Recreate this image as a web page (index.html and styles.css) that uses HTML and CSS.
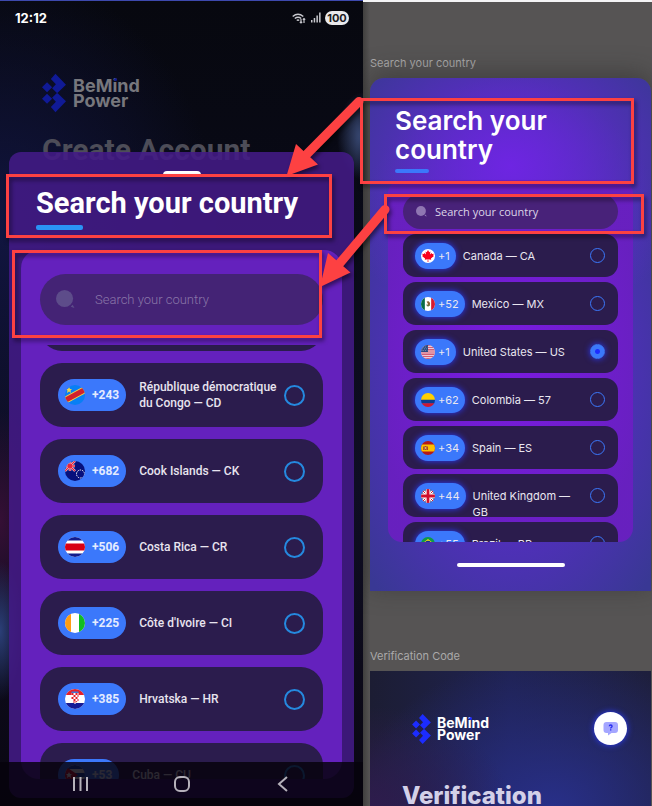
FILE: index.html
```html
<!DOCTYPE html>
<html lang="en">
<head>
<meta charset="utf-8">
<meta name="viewport" content="width=device-width, initial-scale=1">
<title>Search your country</title>
<link rel="stylesheet" href="styles.css">
</head>
<body>
<svg class="defs" aria-hidden="true">
  <symbol id="mark" viewBox="0 0 57 91">
    <path d="M32 0 57 26 36 46 24 34 33 25 21 12ZM32 91 57 65 36 45 24 57 33 66 21 79ZM12 20 24 32 12 44 0 32ZM12 47 24 59 12 71 0 59Z"/>
  </symbol>
  <symbol id="lens" viewBox="0 0 20 20">
    <circle cx="9" cy="9" r="9"/><path d="M15.500 17.500 17.500 15.500 19.500 19Z"/>
  </symbol>
  <symbol id="cd" viewBox="0 0 20 20"><path fill="#087ff5" d="M0 0h20v20H0z"/><path stroke="#f3d64a" stroke-width="7" d="M-1 16 21 4"/><path stroke="#d3202c" stroke-width="5" d="M-1 16 21 4"/><path fill="#f3d64a" d="m4 2 1 2h2L5.500 5.500 6 8 4 6.500 2 8l.5-2.500L1 4h2z"/></symbol>
  <symbol id="ck" viewBox="0 0 20 20"><path fill="#07107c" d="M0 0h20v20H0z"/><path stroke="#fff" stroke-width="2.400" d="M0 0 10 10M10 0 0 10M5 0v10M0 5h10"/><path stroke="#e3233b" stroke-width="1.400" d="M0 0 10 10M10 0 0 10M5 0v10M0 5h10"/><circle cx="15.500" cy="13" r="4" fill="none" stroke="#fff" stroke-width="1" stroke-dasharray="1.500 1"/></symbol>
  <symbol id="cr" viewBox="0 0 20 20"><path fill="#fff" d="M0 0h20v20H0z"/><path fill="#111a8c" d="M0 0h20v3.500H0zM0 16.500h20V20H0z"/><path fill="#d80012" d="M0 6.500h20v7H0z"/></symbol>
  <symbol id="ci" viewBox="0 0 20 20"><path fill="#fff" d="M0 0h20v20H0z"/><path fill="#ff9d13" d="M0 0h6v20H0z"/><path fill="#12bd22" d="M14 0h6v20h-6z"/></symbol>
  <symbol id="hr" viewBox="0 0 20 20"><path fill="#fff" d="M0 0h20v20H0z"/><path fill="#e5202a" d="M0 0h20v6H0z"/><path fill="#161a96" d="M0 14h20v6H0z"/><path fill="#fff" d="M6.500 4h7v8l-3.500 3-3.500-3z"/><path fill="#e5202a" d="M6.500 4h2v2h-2zm4 0h2v2h-2zm-2 2h2v2h-2zm4 0h1v2h-1zm-6 2h2v2h-2zm4 0h2v2h-2zm-2 2h2v2h-2zm4 0h1v2h-1zm-4 2h1v2h-1zm2 0h2l-2 2z"/><path fill="#3e7bd8" d="M6.500 2.500h7V4h-7z"/></symbol>
  <symbol id="cu" viewBox="0 0 20 20"><path fill="#fff" d="M0 0h20v20H0z"/><path fill="#174bb8" d="M0 0h20v4H0zM0 8h20v4H0zM0 16h20v4H0z"/><path fill="#d8142c" d="m0 1 13 9-13 9z"/><path fill="#fff" d="m4 7 1 2h2L5.500 10.500 6 13 4 11.500 2 13l.5-2.500L1 9h2z"/></symbol>
  <symbol id="ca" viewBox="0 0 20 20"><path fill="#fff" d="M0 0h20v20H0z"/><path fill="#f8001c" d="m10 1.500 1.800 3 1.700-.8-.6 4.300 2.400-2.300.6 1.500 2.300-.4-.8 2.400 1.100.8-4.300 3.700.4 1.500-4.200-.6.200 4h-1.200l.2-4-4.200.6.400-1.500L1.500 10l1.100-.8-.8-2.400 2.300.4.600-1.500L7.100 8l-.6-4.300 1.700.8z"/></symbol>
  <symbol id="mx" viewBox="0 0 20 20"><path fill="#fff" d="M0 0h20v20H0z"/><path fill="#086b48" d="M0 0h5.500v20H0z"/><path fill="#d61a32" d="M14.500 0H20v20h-5.500z"/><path fill="#8b6234" d="M8 6.500 11 6l2 2.500-.5 4-2.500 1-2-1.500 2-2z"/><path stroke="#4c8c52" fill="none" d="M7.500 11q2.500 4 5 0"/></symbol>
  <symbol id="us" viewBox="0 0 20 20"><path fill="#fff" d="M0 0h20v20H0z"/><path stroke="#c2294b" stroke-width="1.600" d="M0 1h20M0 4h20M0 7h20M0 10h20M0 13h20M0 16h20M0 19h20"/><path fill="#27477f" d="M0 0h10v10H0z"/><path stroke="#c6cfe3" stroke-dasharray="1 1.500" d="M1 3h8M2 5.500h7M1 8h8"/></symbol>
  <symbol id="co" viewBox="0 0 20 20"><path fill="#ffd000" d="M0 0h20v10H0z"/><path fill="#093d91" d="M0 9.500h20v5.500H0z"/><path fill="#cf1730" d="M0 14.500h20V20H0z"/></symbol>
  <symbol id="es" viewBox="0 0 20 20"><path fill="#b51919" d="M0 0h20v20H0z"/><path fill="#fcc100" d="M0 5h20v10H0z"/><path fill="#a6452a" d="M3 8h1.500v5H3zM8.500 8H10v5H8.500zM5 7h3v6H5z"/><path fill="#e6c9b2" d="M5.700 9h1.600v2H5.700z"/></symbol>
  <symbol id="gb" viewBox="0 0 20 20"><path fill="#07236a" d="M0 0h20v20H0z"/><path stroke="#fff" stroke-width="4" d="m0 0 20 20M20 0 0 20"/><path stroke="#d0102d" stroke-width="1.400" d="m0 0 20 20M20 0 0 20"/><path stroke="#fff" stroke-width="7" d="M10 0v20M0 10h20"/><path stroke="#d0102d" stroke-width="4" d="M10 0v20M0 10h20"/></symbol>
  <symbol id="br" viewBox="0 0 20 20"><path fill="#0d9a48" d="M0 0h20v20H0z"/><path fill="#fcdc12" d="m10 3 9 7-9 7-9-7z"/><circle cx="10" cy="10" r="4.500" fill="#15348a"/></symbol>
</svg>

<main class="board">
  <section class="phone">
    <header class="status">
      <time>12:12</time>
      <div class="signals">
        <svg class="wifi" viewBox="0 0 15 12" fill="none" stroke="#c8c8ce"><path stroke-width="1.500" d="M.7 4.500Q6 0 11.300 4.500M2.800 6.500Q6 4 9.200 6.500M4.800 8.500Q6 7.500 7.200 8.500"/><path stroke-width="1.200" d="M9 7v4M7.800 9.800 9 11l1.200-1.200M12 11V6.500M10.800 7.700 12 6.500l1.200 1.200"/></svg>
        <svg class="bars" viewBox="0 0 10 11" fill="#c8c8ce"><path d="M0 8h1.500v2.500H0zM2.700 6h1.500v4.500H2.700zM5.400 3.500h1.500v7H5.400zM8.100.5h1.500v10H8.100z"/></svg>
        <span class="battery">100</span>
      </div>
    </header>
    <div class="backdrop">
      <div class="logo logo-dim">
        <svg class="logo-mark"><use href="#mark"/></svg>
        <span class="logo-text">BeMind<br>Power</span>
      </div>
      <h2 class="create">Create Account</h2>
    </div>
    <div class="sheet">
      <span class="handle"></span>
      <h1 class="sheet-title">Search your country</h1>
      <div class="panel">
        <label class="search"><svg class="lens"><use href="#lens"/></svg><input type="search" placeholder="Search your country" aria-label="Search your country"></label>
        <div class="scroller">
          <ul class="list">
            <li class="row"></li>
            <li><label class="row"><span class="pill"><svg class="flag"><use href="#cd"/></svg>+243</span><span class="name">République démocratique du Congo — CD</span><input type="radio" name="a"></label></li>
            <li><label class="row"><span class="pill"><svg class="flag"><use href="#ck"/></svg>+682</span><span class="name">Cook Islands — CK</span><input type="radio" name="a"></label></li>
            <li><label class="row"><span class="pill"><svg class="flag"><use href="#cr"/></svg>+506</span><span class="name">Costa Rica — CR</span><input type="radio" name="a"></label></li>
            <li><label class="row"><span class="pill"><svg class="flag"><use href="#ci"/></svg>+225</span><span class="name">Côte d'Ivoire — CI</span><input type="radio" name="a"></label></li>
            <li><label class="row"><span class="pill"><svg class="flag"><use href="#hr"/></svg>+385</span><span class="name">Hrvatska — HR</span><input type="radio" name="a"></label></li>
            <li><label class="row"><span class="pill"><svg class="flag"><use href="#cu"/></svg>+53</span><span class="name">Cuba — CU</span><input type="radio" name="a"></label></li>
          </ul>
        </div>
      </div>
    </div>
    <nav class="keys">
      <button aria-label="Recents"><svg viewBox="0 0 18 18"><path d="M2 2v14M8.500 2v14M15 2v14"/></svg></button>
      <button aria-label="Home"><svg viewBox="0 0 18 18"><rect x="2" y="2" width="14" height="14" rx="5"/></svg></button>
      <button aria-label="Back"><svg viewBox="0 0 18 18"><path d="M13 2 5 9l8 7"/></svg></button>
    </nav>
  </section>

  <section class="canvas">
    <p class="frame-label">Search your country</p>
    <article class="frame">
      <h1 class="frame-title">Search your country</h1>
      <div class="panel">
        <label class="search"><svg class="lens"><use href="#lens"/></svg><input type="search" placeholder="Search your country" aria-label="Search your country"></label>
        <ul class="list">
          <li><label class="row"><span class="pill"><svg class="flag"><use href="#ca"/></svg>+1</span><span class="name">Canada — CA</span><input type="radio" name="b"></label></li>
          <li><label class="row"><span class="pill"><svg class="flag"><use href="#mx"/></svg>+52</span><span class="name">Mexico — MX</span><input type="radio" name="b"></label></li>
          <li><label class="row"><span class="pill"><svg class="flag"><use href="#us"/></svg>+1</span><span class="name">United States — US</span><input type="radio" name="b" checked></label></li>
          <li><label class="row"><span class="pill"><svg class="flag"><use href="#co"/></svg>+62</span><span class="name">Colombia — 57</span><input type="radio" name="b"></label></li>
          <li><label class="row"><span class="pill"><svg class="flag"><use href="#es"/></svg>+34</span><span class="name">Spain — ES</span><input type="radio" name="b"></label></li>
          <li><label class="row"><span class="pill"><svg class="flag"><use href="#gb"/></svg>+44</span><span class="name">United Kingdom — GB</span><input type="radio" name="b"></label></li>
          <li><label class="row"><span class="pill"><svg class="flag"><use href="#br"/></svg>+55</span><span class="name">Brazil — BR</span><input type="radio" name="b"></label></li>
        </ul>
      </div>
      <span class="home-bar"></span>
    </article>
    <p class="frame-label second">Verification Code</p>
    <article class="verify">
      <div class="verify-head">
        <div class="logo">
          <svg class="logo-mark"><use href="#mark"/></svg>
          <span class="logo-text">BeMind<br>Power</span>
        </div>
        <button class="help" aria-label="Help"><svg viewBox="0 0 16 14"><path fill="#a4a6ff" d="M3.500 0h8.500a3 3 0 0 1 3 3v5a3 3 0 0 1-3 3H8.500L5 13.500V11H3.500a3 3 0 0 1-3-3V3a3 3 0 0 1 3-3z"/><path fill="none" stroke="#262cf0" stroke-width="1.300" d="M6.300 4.300Q6.300 3 7.700 3t1.400 1.300q0 .7-.8 1.100-.6.300-.6 1.100M7.700 7.300v1.300"/></svg></button>
      </div>
      <h2 class="verify-title">Verification</h2>
    </article>
  </section>

  <svg class="notes" viewBox="0 0 652 806" preserveAspectRatio="none" aria-hidden="true">
    <g fill="none" stroke="#fd4142" stroke-width="3">
      <path d="M7.500 175.500h323v61H7.500zM13.500 251.500h307v85h-307zM361.500 99.500h271v83h-271zM385.500 195.500h257v37h-257z"/>
      <path stroke-width="9" stroke-linecap="round" d="M359 101.500 306 155M385 209.500 340 263"/>
    </g>
    <path fill="#fd4142" d="m286.500 176 9.500-32 22 20.500zM320 287l8-34 22.500 19.500z"/>
  </svg>
</main>
</body>
</html>
```
FILE: styles.css
```css
* { box-sizing: border-box; }

body {
  margin: 0;
  background: #565454;
  font-family: Roboto, "Liberation Sans", sans-serif;
  color: #fff;
}

h1, h2, p, ul { margin: 0; padding: 0; }
ul { list-style: none; }
button { border: 0; padding: 0; background: none; }
.defs { display: none; }

.board {
  position: relative;
  display: grid;
  grid-template-columns: 363fr 289fr;
  grid-template-rows: minmax(0, 1fr);
  height: 100vh;
  overflow: hidden;
}

/* Shared parts */
.logo { display: flex; align-items: center; }
.logo-mark { fill: #1c2cff; }
.logo-text { position: relative; font-family: Inter, sans-serif; font-weight: 700; }
/* Blue dot over the "i" of the wordmark */
.logo-text::after {
  content: "";
  position: absolute;
  left: 61%;
  top: 0;
  width: 3px;
  height: 3px;
  border-radius: 50%;
  background: #1c2cff;
}

.search { display: flex; align-items: center; }
.search input {
  flex: 1;
  min-width: 0;
  border: 0;
  padding: 0;
  outline: 0;
  background: none;
  color: inherit;
  font: inherit;
}
.search input::placeholder { color: inherit; opacity: 1; }

.row { display: flex; background: #2b1c4d; }
.pill {
  display: flex;
  align-items: center;
  flex: none;
  background: #3b78fb;
}
.flag { border-radius: 50%; flex: none; }
.name { flex: 1; min-width: 0; }
.row input {
  appearance: none;
  flex: none;
  margin: 0;
  border-radius: 50%;
}

/* Phone */
.phone {
  position: relative;
  overflow: hidden;
  border-top: 1px solid #3d49ad;
  background:
    radial-gradient(ellipse 26px 44px at 100% 135px, #3f5180, transparent),
    radial-gradient(ellipse 24px 70px at 0 630px, #2b3f78, transparent),
    radial-gradient(ellipse 40px 110px at 0 520px, #350f35, transparent),
    radial-gradient(ellipse 220px 260px at 0 230px, #111540, transparent),
    linear-gradient(#07080f, #090a18 30%, #0f0e24 60%, #0a0712);
}

.status {
  display: flex;
  justify-content: space-between;
  align-items: center;
  padding: 8px 14px 0 15px;
  height: 25px;
  font: 700 13px/16px Inter, sans-serif;
}
.signals { display: flex; align-items: center; gap: 4px; }
.wifi { width: 15px; height: 12px; }
.bars { width: 10px; height: 11px; }
.battery {
  width: 24px;
  border-radius: 7px;
  background: #e9e9ec;
  color: #1b1b22;
  font-size: 11px;
  line-height: 14px;
  text-align: center;
}

.backdrop { padding: 47px 42px 0; }
.logo-dim { gap: 7px; }
.logo-dim .logo-mark { width: 24px; height: 40px; fill: #101a96; }
.logo-dim .logo-text { font-size: 18px; line-height: 15px; color: #77777d; }
.logo-dim .logo-text::after { background: #101a96; }
.create { margin-top: 20px; font-size: 30px; line-height: 34px; color: #4d4d58; }

.sheet {
  position: absolute;
  inset: 151px 9px 8px;
  display: flex;
  flex-direction: column;
  padding: 19px 12px;
  border-radius: 12px;
  background: rgba(67, 26, 134, .88);
}
.handle {
  flex: none;
  align-self: center;
  width: 38px;
  height: 4px;
  border-radius: 4px 4px 0 0;
  background: #fff;
}
.sheet-title {
  margin: 11px 15px 0;
  font-size: 29px;
  line-height: 34px;
}
.sheet-title::after, .frame-title::after { content: ""; display: block; border-radius: 2px; }
.sheet-title::after { margin-top: 5px; width: 47px; height: 5px; background: #2a93f5; }

.sheet .panel {
  flex: 1;
  display: flex;
  flex-direction: column;
  min-height: 0;
  margin-top: 20px;
  padding: 24px 19px 0;
  border-radius: 18px;
  background: #6421bd;
  overflow: hidden;
}
.sheet .search {
  flex: none;
  height: 51px;
  padding: 0 16px;
  gap: 20px;
  border-radius: 26px;
  background: #442375;
  color: #8a76a8;
  font-size: 13px;
  font-weight: 300;
}
.sheet .lens { width: 19px; height: 19px; fill: #5d4c8a; }
.scroller { flex: 1; min-height: 0; margin-top: 20px; overflow: hidden; }
.sheet .list { display: grid; gap: 12px; margin-top: -58px; }
.sheet .row {
  align-items: center;
  height: 64px;
  padding: 0 18px;
  border-radius: 22px;
}
.sheet .pill {
  height: 32px;
  padding: 0 7px;
  gap: 7px;
  border-radius: 16px;
  font-size: 12px;
  font-weight: 700;
  color: #e4ebff;
}
.sheet .flag { width: 20px; height: 20px; }
.sheet .name { margin-left: 13px; font-size: 12px; font-weight: 500; line-height: 16px; color: #e8e4ef; }
.sheet .row input { width: 21px; height: 21px; border: 2px solid #2589df; }

.keys {
  position: absolute;
  inset: auto 0 0;
  display: flex;
  justify-content: space-around;
  align-items: flex-start;
  height: 44px;
  padding: 13px 30px 0;
  background: rgba(6, 2, 12, .84);
}
.keys svg { display: block; width: 18px; height: 18px; fill: none; stroke: #b5b1ba; stroke-width: 2px; }

/* Design canvas */
.canvas {
  display: flex;
  flex-direction: column;
  min-width: 0;
  padding: 0 1px 0 7px;
  border-top: 2px solid #f4f4f6;
  background: linear-gradient(90deg, #403f3e, #565454 7px);
}
.frame-label {
  margin-top: 54px;
  font: 11px/14px Inter, sans-serif;
  color: #aaa9a9;
}
.frame {
  flex: none;
  margin-top: 8px;
  padding: 28px 18px 24px;
  border-radius: 14px 14px 0 0;
  background:
    radial-gradient(ellipse 190px 160px at 50% 88px, #6e25e2, transparent),
    radial-gradient(ellipse 190px 300px at 50% 58%, #6a26e4, #393894);
  box-shadow: 0 -4px 24px rgba(40, 40, 40, .5);
}
.frame-title {
  margin: 0 60px 0 7px;
  font: 600 26px/29px Inter, sans-serif;
}
.frame-title::after { margin-top: 5px; width: 34px; height: 4px; background: #3b78fb; }
.frame .panel {
  height: 362px;
  margin-top: 7px;
  padding: 14px 15px 0;
  border-radius: 14px;
  overflow: hidden;
  background: radial-gradient(ellipse 140px 210px at 50% 50%, #7a1be0, rgba(105, 31, 192, .95));
}
.frame .search {
  height: 35px;
  padding: 0 13px;
  gap: 8px;
  border-radius: 18px;
  background: #482279;
  color: #dcd5e8;
  font: 11px/14px "Open Sans", sans-serif;
}
.frame .lens { width: 11px; height: 11px; fill: #8f76b2; }
.frame .list { display: grid; gap: 5px; margin-top: 5px; }
.frame .row {
  align-items: flex-start;
  height: 43px;
  padding: 9px 13px 0 12px;
  border-radius: 13px;
  font: 11px/16px Inter, sans-serif;
  color: #e9e6f0;
}
.frame .pill {
  height: 26px;
  padding: 0 6px;
  gap: 3px;
  border-radius: 13px;
  box-shadow: 0 0 6px #2b3cff;
}
.frame .flag { width: 14px; height: 14px; }
.frame .name { margin: 5px 12px 0 7px; }
.frame .row input { width: 15px; height: 15px; margin-top: 5px; border: 1px solid #3b78fb; }
.frame .row input:checked {
  background: radial-gradient(circle, #1c2cff 2px, #3b78fb 3px);
  box-shadow: 0 0 6px #2b3cff;
}
.home-bar {
  display: block;
  width: 108px;
  height: 4px;
  margin: 21px auto 0;
  border-radius: 2px;
  background: #fff;
}
.second { margin-top: 58px; }
.verify {
  flex: 1;
  min-height: 0;
  overflow: hidden;
  margin-top: 8px;
  padding: 41px 24px 0 32px;
  background:
    radial-gradient(ellipse 140px 100px at 0 100%, #2e1c4d, transparent),
    radial-gradient(ellipse 200px 150px at 65% 100%, #282f88, transparent),
    linear-gradient(90deg, #1c1d33, #1f2252 50%, #1e1f3c);
}
.verify-head { display: flex; justify-content: space-between; align-items: center; padding-left: 10px; }
.verify .logo { gap: 6px; }
.verify .logo-mark { width: 19px; height: 30px; }
.verify .logo-text { font-size: 14px; line-height: 12px; }
.help {
  display: grid;
  place-items: center;
  width: 33px;
  height: 33px;
  border-radius: 50%;
  background: #fff;
  box-shadow: 0 0 6px #2b3cff;
}
.help svg { width: 16px; height: 14px; }
.verify-title { margin-top: 36px; font: 800 24px/30px Inter, sans-serif; color: #d3d0e8; }

/* Annotation layer */
.notes {
  position: absolute;
  inset: 0;
  width: 100%;
  height: 100%;
  pointer-events: none;
  filter: drop-shadow(2px 3px 2px rgba(0, 0, 0, .5));
}
```
